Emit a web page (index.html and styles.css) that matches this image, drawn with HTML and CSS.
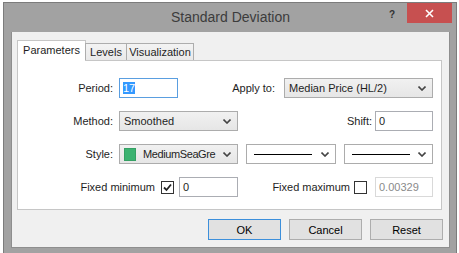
FILE: index.html
```html
<!DOCTYPE html>
<html lang="en">
  <head>
    <meta charset="UTF-8" />
    <title>Standard Deviation</title>
    <link rel="stylesheet" href="styles.css">
  </head>
  <body>
    <div class="window">
      <div class="titlebar">
        <div></div>
        <div class="title">Standard Deviation</div>
        <div class="caption-buttons">
          <span class="help">?</span>
          <span class="close">
            <svg width="9" height="9" viewBox="0 0 9 9">
              <path d="M1 1 L8 8 M8 1 L1 8" stroke="#fff" stroke-width="1.6" />
            </svg>
          </span>
        </div>
      </div>

      <div class="client">
        <div class="tabs">
          <div class="tab active tab-params">Parameters</div>
          <div class="tab tab-levels">Levels</div>
          <div class="tab tab-visual">Visualization</div>
        </div>

        <div class="panel">
          <div class="row">
            <label class="lbl w95">Period:</label>
            <div class="edit focused w59"><span class="sel">17</span></div>
            <label class="lbl w97">Apply to:</label>
            <div class="combo w149 ml9">
              <span class="combo-text">Median Price (HL/2)</span>
              <svg class="arrow" width="8" height="5" viewBox="0 0 8 5"><path d="M0.5 0.5 L4 4 L7.5 0.5" fill="none" stroke="#444" stroke-width="1.6" /></svg>
            </div>
          </div>

          <div class="row">
            <label class="lbl w95">Method:</label>
            <div class="combo w119">
              <span class="combo-text">Smoothed</span>
              <svg class="arrow" width="8" height="5" viewBox="0 0 8 5"><path d="M0.5 0.5 L4 4 L7.5 0.5" fill="none" stroke="#444" stroke-width="1.6" /></svg>
            </div>
            <label class="lbl w134">Shift:</label>
            <div class="edit w58 ml3">0</div>
          </div>

          <div class="row">
            <label class="lbl w95">Style:</label>
            <div class="combo w119">
              <span class="swatch"></span>
              <span class="combo-text tight">MediumSeaGre</span>
              <svg class="arrow" width="8" height="5" viewBox="0 0 8 5"><path d="M0.5 0.5 L4 4 L7.5 0.5" fill="none" stroke="#444" stroke-width="1.6" /></svg>
            </div>
            <div class="combo white w90 ml8">
              <span class="line"></span>
              <svg class="arrow" width="8" height="5" viewBox="0 0 8 5"><path d="M0.5 0.5 L4 4 L7.5 0.5" fill="none" stroke="#444" stroke-width="1.6" /></svg>
            </div>
            <div class="combo white w89 ml8">
              <span class="line"></span>
              <svg class="arrow" width="8" height="5" viewBox="0 0 8 5"><path d="M0.5 0.5 L4 4 L7.5 0.5" fill="none" stroke="#444" stroke-width="1.6" /></svg>
            </div>
          </div>

          <div class="row">
            <label class="lbl w137">Fixed minimum</label>
            <span class="check">
              <svg width="11" height="11" viewBox="0 0 11 11"><path d="M2 5.5 L4.5 8 L9 2.5" fill="none" stroke="#222" stroke-width="1.8" /></svg>
            </span>
            <div class="edit w59 ml5">0</div>
            <label class="lbl w112">Fixed maximum</label>
            <span class="check ml4"></span>
            <div class="edit disabled w58 ml8">0.00329</div>
          </div>
        </div>

        <div class="buttons">
          <button class="btn default">OK</button>
          <button class="btn">Cancel</button>
          <button class="btn">Reset</button>
        </div>
      </div>
    </div>
  </body>
</html>
```

FILE: styles.css
```css
body {
  margin: 2px 2px 0 3px;
  background-color: #fff;
  font-family: "Liberation Sans", Arial, sans-serif;
  font-size: 11px;
  color: #1e1e1e;
}

.window {
  width: 454px;
  height: 251px;
  box-sizing: border-box;
  background-color: #a2a2a2;
  border: 1px solid #7c7c7c;
  border-bottom: none;
}

/* title bar */
.titlebar {
  display: grid;
  grid-template-columns: 1fr auto 1fr;
  height: 29px;
}

.title {
  font-size: 14px;
  color: #3c3c3c;
  line-height: 29px;
  padding-left: 1px;
}

.caption-buttons {
  display: flex;
  justify-content: flex-end;
  align-items: flex-start;
}

.help {
  font-size: 10px;
  font-weight: bold;
  color: #333;
  margin-top: 6px;
  margin-right: 12px;
}

.close {
  display: flex;
  align-items: center;
  justify-content: center;
  width: 45px;
  height: 20px;
  background-color: #c75050;
  margin-right: 4px;
}

/* client area */
.client {
  margin: 0 6px 0 7px;
  height: 216px;
  box-sizing: border-box;
  background-color: #f0f0f0;
  border: 1px solid #8e8e8e;
  border-top: none;
}

.tabs {
  display: flex;
  align-items: flex-end;
  height: 20px;
  margin: 0 0 0 5px;
  padding-top: 8px;
  position: relative;
  z-index: 1;
}

.tab {
  box-sizing: border-box;
  height: 17px;
  line-height: 16px;
  text-align: center;
  background: linear-gradient(#f3f3f3, #e9e9e9);
  border: 1px solid #adadad;
  border-bottom: none;
  margin-left: -1px;
}

.tab.active {
  height: 21px;
  line-height: 19px;
  margin-left: 0;
  margin-bottom: -1px;
  background: #fff;
  border-color: #c6c6c6;
}

.tab-params { width: 69px; }
.tab-levels { width: 42px; }
.tab-visual { width: 68px; }

.panel {
  margin-left: 5px;
  width: 425px;
  height: 150px;
  box-sizing: border-box;
  background-color: #fff;
  border: 1px solid #c6c6c6;
  padding-top: 17px;
  display: flex;
  flex-direction: column;
  gap: 13px;
}

.row {
  display: flex;
  align-items: center;
  height: 20px;
}

.lbl {
  flex: none;
  text-align: right;
  margin-right: 6px;
}

.edit {
  box-sizing: border-box;
  height: 20px;
  line-height: 18px;
  padding-left: 3px;
  border: 1px solid #abadb3;
  background-color: #fff;
}

.edit.focused {
  border-color: #5a9ee0;
}

.edit.disabled {
  border-color: #d9d9d9;
  color: #8a8a8a;
}

.sel {
  background-color: #3399ff;
  color: #fff;
}

.combo {
  box-sizing: border-box;
  height: 20px;
  display: flex;
  align-items: center;
  padding-left: 4px;
  border: 1px solid #acacac;
  background: linear-gradient(#f1f1f1, #e6e6e6);
}

.combo.white {
  background: #fff;
  padding-left: 7px;
}

.combo-text {
  white-space: nowrap;
}

.tight {
  letter-spacing: -0.4px;
}

.arrow {
  margin-left: auto;
  margin-right: 6px;
  flex: none;
}

.swatch {
  box-sizing: border-box;
  width: 12px;
  height: 13px;
  background-color: #3cb371;
  border: 1px solid #35a064;
  margin-right: 7px;
  flex: none;
}

.line {
  width: 58px;
  height: 1px;
  background-color: #000;
}

.check {
  box-sizing: border-box;
  width: 13px;
  height: 13px;
  border: 1px solid #333;
  background-color: #fff;
  display: flex;
  align-items: center;
  justify-content: center;
  flex: none;
}

.w58 { width: 58px; }
.w59 { width: 59px; }
.w89 { width: 89px; }
.w90 { width: 90px; }
.w95 { width: 95px; }
.w97 { width: 97px; margin-right: 0; }
.w112 { width: 112px; margin-right: 0; }
.w119 { width: 119px; }
.w134 { width: 134px; margin-right: 0; }
.w137 { width: 137px; }
.w149 { width: 149px; }

.ml3 { margin-left: 3px; }
.ml4 { margin-left: 4px; }
.ml5 { margin-left: 5px; }
.ml8 { margin-left: 8px; }
.ml9 { margin-left: 9px; }

/* dialog buttons */
.buttons {
  display: flex;
  justify-content: flex-end;
  gap: 8px;
  margin-top: 9px;
  margin-right: 6px;
}

.btn {
  width: 73px;
  height: 21px;
  padding: 0;
  font-family: inherit;
  font-size: 11px;
  color: #000;
  background-color: #e1e1e1;
  border: 1px solid #adadad;
  border-radius: 0;
}

.btn.default {
  border-color: #3c8fdb;
}
```
